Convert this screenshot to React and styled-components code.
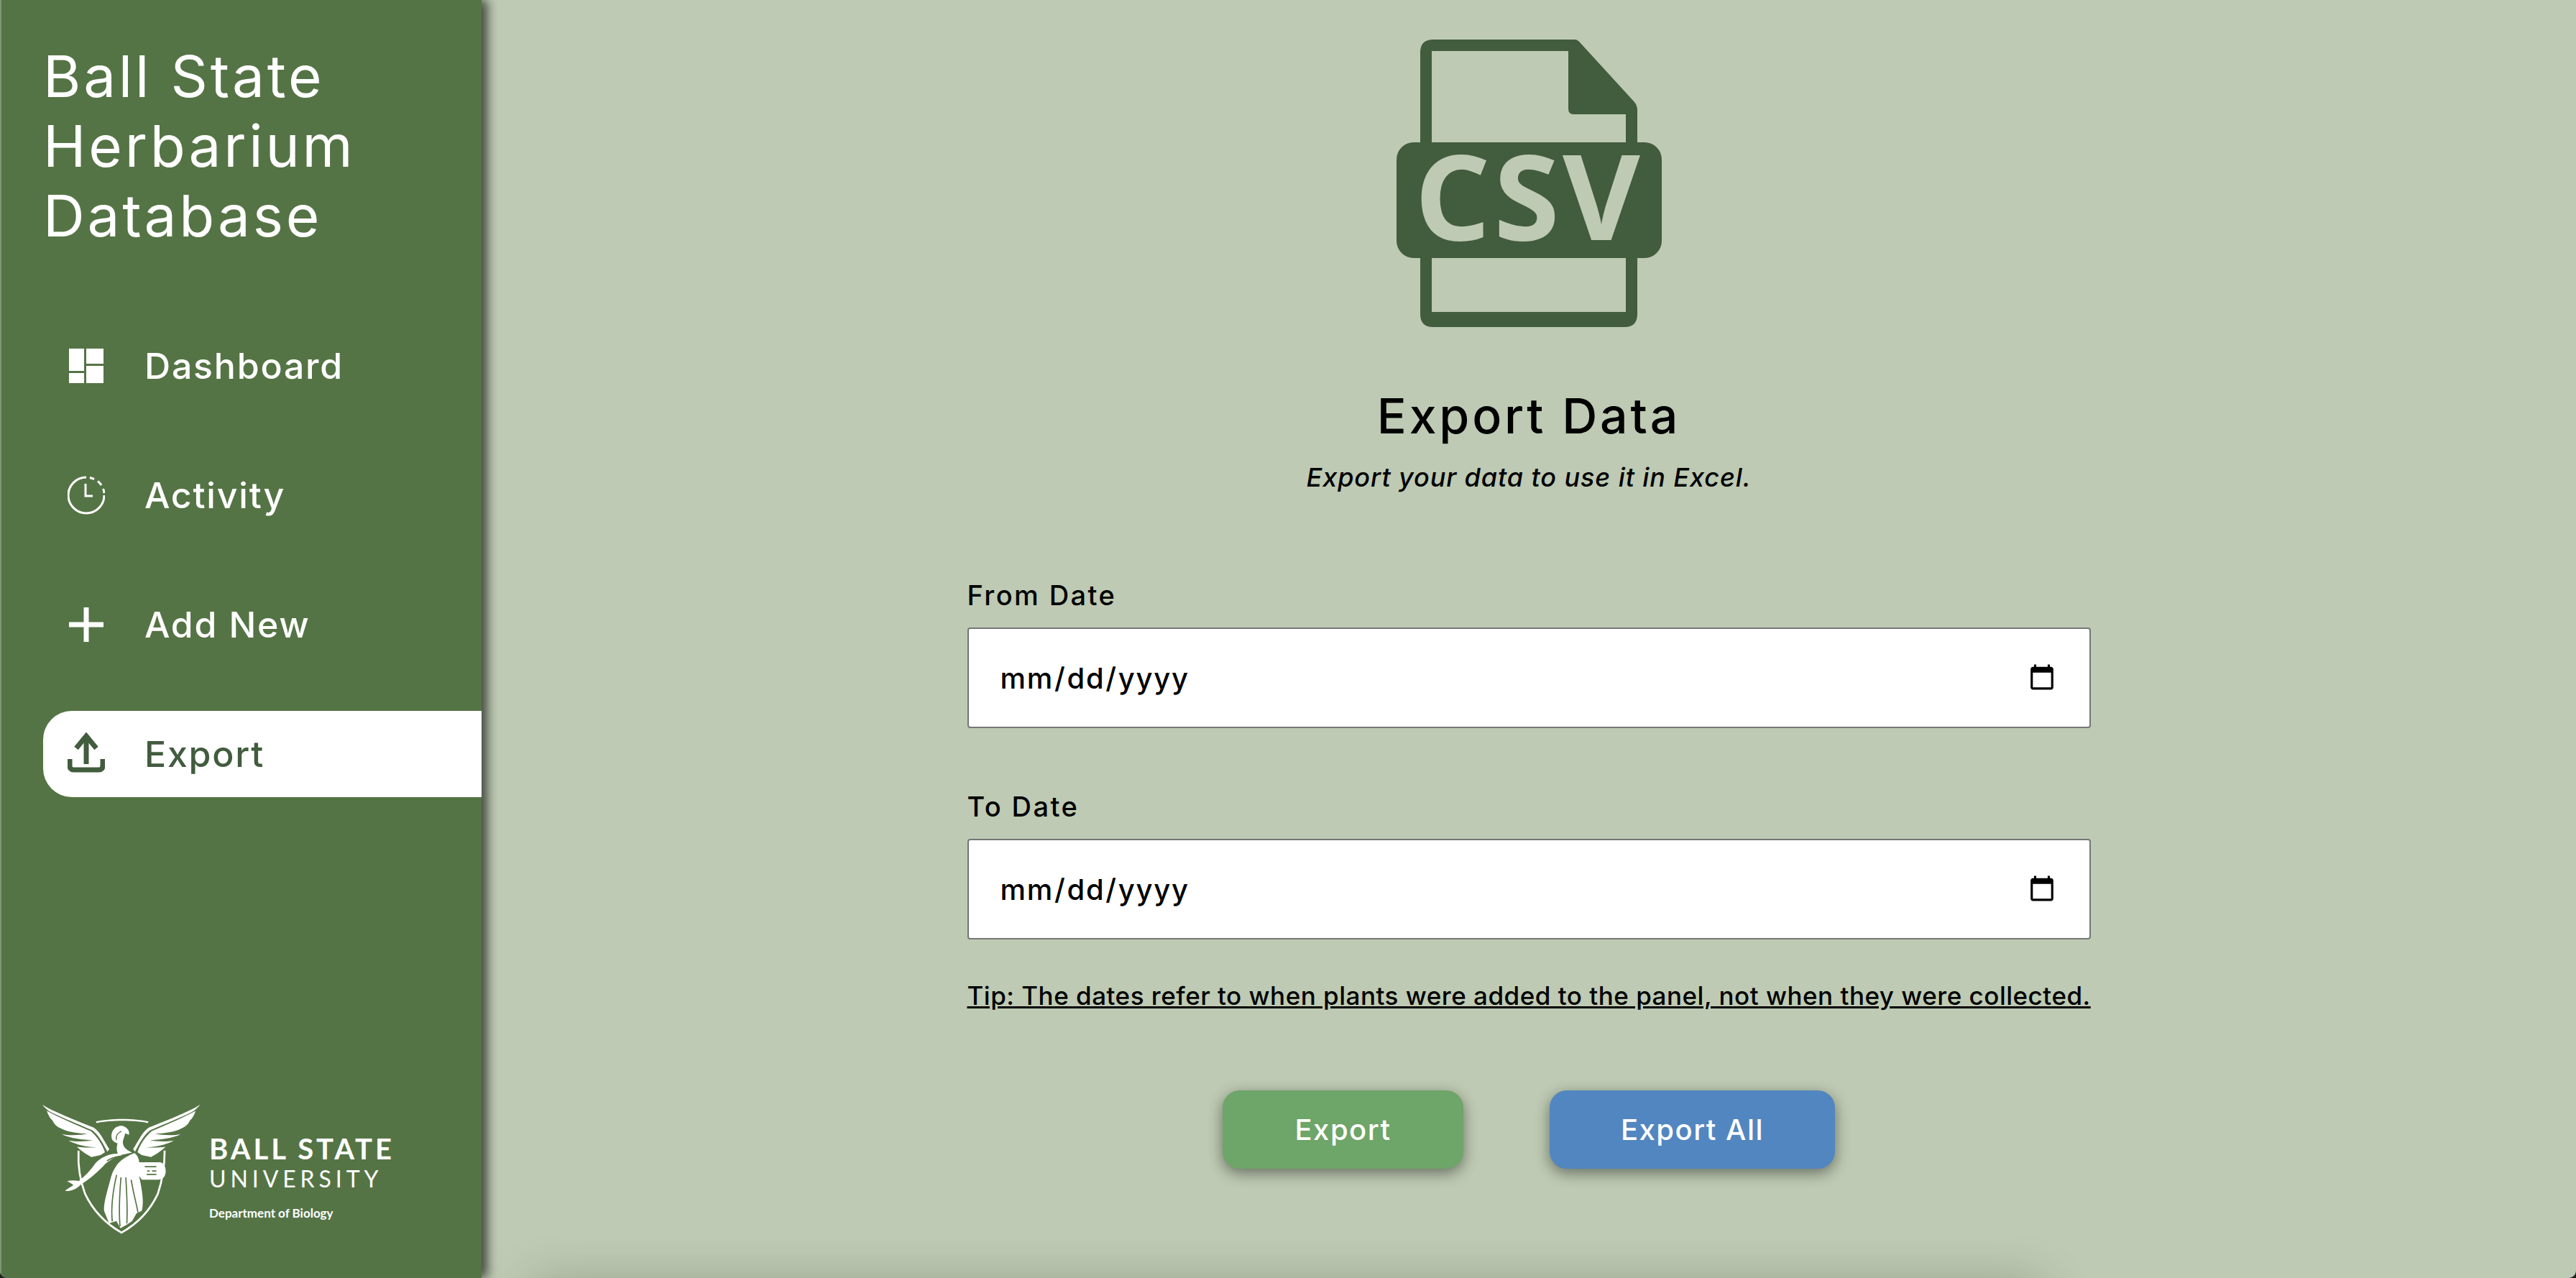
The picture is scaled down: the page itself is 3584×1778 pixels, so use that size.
import styled, { createGlobalStyle } from "styled-components";

const GlobalStyle = createGlobalStyle`
  html, body {
    margin: 0;
    padding: 0;
    background: #1f1f1f;
  }
  * {
    box-sizing: border-box;
  }
`;

const Page = styled.div`
  display: flex;
  width: 3584px;
  height: 1778px;
  overflow: hidden;
  background: #becab3;
  border-radius: 0 0 10px 10px;
  font-family: Inter, "Liberation Sans", sans-serif;
`;

const Sidebar = styled.aside`
  position: relative;
  z-index: 1;
  flex: 0 0 670px;
  display: flex;
  flex-direction: column;
  padding: 57px 0 61px 60px;
  background: #557445;
  border-left: 2px solid #7f9672;
  box-shadow: 8px 0 14px rgba(0, 0, 0, 0.65);
`;

const Title = styled.h1`
  margin: 0 0 101px -2px;
  color: #fff;
  font-size: 80px;
  font-weight: 400;
  line-height: 97px;
  letter-spacing: 3.8px;
`;

const Nav = styled.nav`
  display: flex;
  flex-direction: column;
  gap: 60px;
`;

const NavRow = styled.a`
  display: flex;
  align-items: center;
  height: 120px;
  margin-left: -2px;
  padding-left: 34px;
  border-radius: 40px 0 0 40px;
  background: ${(p) => (p.$active ? "#fff" : "transparent")};
  color: ${(p) => (p.$active ? "#425c3e" : "#fff")};
  font-size: 50px;
  font-weight: 500;
  letter-spacing: 1.8px;
`;

const NavIcon = styled.svg`
  flex: 0 0 52px;
  width: 52px;
  height: 60px;
  margin-right: 55px;
`;

const Brand = styled.div`
  display: flex;
  margin: auto 0 0 -3px;
  gap: 12px;
  color: #fff;
`;

const Seal = styled.svg`
  width: 220px;
  height: 181px;
`;

const BrandText = styled.div`
  display: flex;
  flex-direction: column;
  padding-top: 38px;
  font-family: Lato, sans-serif;
`;

const BrandName = styled.span`
  font-size: 40px;
  font-weight: 700;
  line-height: 48px;
  letter-spacing: 3.9px;
`;

const BrandSub = styled.span`
  font-size: 32px;
  font-weight: 400;
  line-height: 36px;
  letter-spacing: 5.9px;
`;

const BrandDept = styled.span`
  margin-top: 19px;
  font-size: 17px;
  font-weight: 700;
  line-height: 22px;
`;

const Main = styled.main`
  flex: 1;
  display: flex;
  flex-direction: column;
  align-items: center;
  padding-top: 55px;
`;

const CsvIcon = styled.svg`
  flex: none;
  width: 369px;
  height: 400px;
`;

const Heading = styled.h2`
  margin: 83px 0 0;
  color: #000;
  font-size: 68px;
  font-weight: 500;
  line-height: 80px;
  letter-spacing: 3.8px;
`;

const Lead = styled.p`
  margin: 24px 0 0;
  color: #000;
  font-size: 36px;
  font-style: italic;
  font-weight: 500;
  line-height: 44px;
  letter-spacing: 0.9px;
`;

const Form = styled.form`
  display: flex;
  flex-direction: column;
  width: 1563px;
  margin-top: 118px;
`;

const Field = styled.label`
  display: flex;
  flex-direction: column;
  margin-bottom: 85px;
  color: #000;
  font-size: 38px;
  font-weight: 500;
  line-height: 48px;
  letter-spacing: 2.4px;
`;

const DateInput = styled.input`
  height: 140px;
  margin-top: 21px;
  padding: 0 44px 0 43px;
  border: 2px solid #767676;
  border-radius: 4px;
  background: #fff;
  color: #000;
  font-family: inherit;
  font-size: 40px;
  font-weight: 500;
  letter-spacing: 1.7px;
`;

const Tip = styled.p`
  margin: -29px 0 0;
  color: #000;
  font-size: 35px;
  font-weight: 500;
  line-height: 44px;
  letter-spacing: 0.5px;
  text-decoration: underline;
  white-space: nowrap;
`;

const Actions = styled.div`
  display: flex;
  justify-content: center;
  gap: 120px;
  margin-top: 110px;
`;

const ActionButton = styled.button`
  width: ${(p) => p.$width}px;
  height: 109px;
  border: 0;
  border-radius: 24px;
  background: ${(p) => p.$color};
  box-shadow: 0 6px 20px rgba(0, 0, 0, 0.45);
  color: #fff;
  font-family: inherit;
  font-size: 40px;
  font-weight: 500;
  letter-spacing: 1.5px;
`;

const NextPanel = styled.div`
  flex: none;
  align-self: flex-start;
  width: 2100px;
  height: 200px;
  margin: 160px 0 0 70px;
  box-shadow: 0 0 70px rgba(0, 0, 0, 0.22);
`;

const Wing = () => (
  <g fill="#fff">
    <path d="M30 30C60 52 150 88 240 124C268 140 284 180 306 214L298 224C280 190 262 156 236 136C170 108 110 84 62 60C50 52 38 42 30 30Z" />
    <path d="M48 56C100 84 170 114 230 140C258 164 276 194 288 226L270 238L232 246C205 232 185 216 172 204C200 208 232 208 250 206C220 206 170 196 138 178C170 184 215 182 238 176C200 176 140 168 110 152C140 158 190 156 216 150C180 150 130 142 106 128C90 122 78 110 72 96C60 86 54 72 48 56Z" />
  </g>
);

const SealMark = () => (
  <Seal viewBox="30 28 652 536">
    <Wing />
    <g transform="translate(710 0) scale(-1 1)">
      <Wing />
    </g>
    <path d="M250 100C310 86 410 86 468 100L464 106C410 94 310 94 254 106Z" fill="#fff" />
    <path
      d="M179 220C176 280 184 340 206 398C236 462 290 520 356 558C424 520 476 462 506 398C522 350 534 300 534 220"
      fill="none"
      stroke="#fff"
      strokeWidth="8"
    />
    <g fill="#fff">
      <path d="M340 232C300 232 270 250 250 270C230 300 205 325 180 345C160 342 145 342 132 346L150 356L158 362C145 372 130 378 124 386C145 388 170 380 190 358C215 345 250 315 280 285C300 262 330 245 360 240Z" />
      <path d="M330 290C345 260 390 235 410 230C430 245 432 270 428 300L430 330C440 380 450 430 440 468L418 478L400 510L378 525L352 540L335 510L305 520L285 470C280 440 300 380 310 340C315 320 320 305 330 290Z" />
      <path d="M318 175C305 140 335 112 362 118C380 124 392 140 386 155L372 148L362 180C360 200 370 215 400 228L345 240C335 225 335 205 340 190C330 186 322 182 318 175Z" />
    </g>
    <path d="M335 176C331 160 340 146 356 140" fill="none" stroke="#557445" strokeWidth="4" />
    <path d="M296 262C320 246 350 240 384 240" fill="none" stroke="#557445" strokeWidth="5" />
    <path
      d="M336 320C322 380 312 450 318 512M354 330C348 400 344 460 350 532M374 330C378 400 382 460 378 520M396 340C406 400 418 440 424 474"
      fill="none"
      stroke="#557445"
      strokeWidth="5"
    />
    <path d="M426 268H516C532 272 540 290 538 310C536 330 524 340 500 340H440L426 320Z" fill="#fff" />
    <path d="M452 286H500M462 304H472M482 304H500M460 318H500" stroke="#557445" strokeWidth="5" fill="none" />
  </Seal>
);

const App = () => (
  <Page>
    <GlobalStyle />
    <Sidebar>
      <Title>
        Ball State
        <br />
        Herbarium
        <br />
        Database
      </Title>
      <Nav>
        <NavRow>
          <NavIcon viewBox="0 0 52 60" fill="#fff">
            <path d="M2 6H23V37H2ZM2 40H23V54H2ZM26 6H50V27H26ZM26 30H50V54H26Z" />
          </NavIcon>
          Dashboard
        </NavRow>
        <NavRow>
          <NavIcon viewBox="0 0 52 60" fill="none" stroke="#fff" strokeWidth="3">
            <path d="M26 5A25 25 0 1 0 51 30" />
            <path d="M31 5.5C33 6 35 6.6 37 7.6M42 10.5C44 12 46 14 47 16M49.5 21C50.4 23 50.8 25 51 27" />
            <path d="M25 14V31H35" />
          </NavIcon>
          Activity
        </NavRow>
        <NavRow>
          <NavIcon viewBox="0 0 52 60" fill="none" stroke="#fff" strokeWidth="7">
            <path d="M26 6V54M2 30H50" />
          </NavIcon>
          Add New
        </NavRow>
        <NavRow $active>
          <NavIcon viewBox="0 0 52 60" fill="none" stroke="#425c3e" strokeWidth="7">
            <path d="M26 44V6" />
            <path d="M12 22L26 5L40 22" />
            <path d="M3 37V46C3 50 5 52 8 52H44C47 52 49 50 49 46V37" />
          </NavIcon>
          Export
        </NavRow>
      </Nav>
      <Brand>
        <SealMark />
        <BrandText>
          <BrandName>BALL STATE</BrandName>
          <BrandSub>UNIVERSITY</BrandSub>
          <BrandDept>Department of Biology</BrandDept>
        </BrandText>
      </Brand>
    </Sidebar>
    <Main>
      <CsvIcon viewBox="0 0 369 400">
        <path
          fillRule="evenodd"
          fill="#425c3e"
          d="M33 18Q33 0 51 0H248Q252 0 256 5L331 87Q335 92 335 98V382Q335 400 317 400H51Q33 400 33 382ZM49 16V379H319V104H246Q239 104 239 96V16Z"
        />
        <rect x="0" y="143" width="369" height="161" rx="24" fill="#425c3e" />
        <text
          x="25"
          y="279"
          fill="#becab3"
          fontFamily="'Open Sans', sans-serif"
          fontSize="166"
          fontWeight="750"
          textLength="314"
          lengthAdjust="spacing"
        >
          CSV
        </text>
      </CsvIcon>
      <Heading>Export Data</Heading>
      <Lead>Export your data to use it in Excel.</Lead>
      <Form>
        <Field>
          From Date
          <DateInput type="date" />
        </Field>
        <Field>
          To Date
          <DateInput type="date" />
        </Field>
        <Tip>Tip: The dates refer to when plants were added to the panel, not when they were collected.</Tip>
      </Form>
      <Actions>
        <ActionButton type="button" $width={335} $color="#6ea568">
          Export
        </ActionButton>
        <ActionButton type="button" $width={397} $color="#5286c0">
          Export All
        </ActionButton>
      </Actions>
      <NextPanel />
    </Main>
  </Page>
);

export default App;
